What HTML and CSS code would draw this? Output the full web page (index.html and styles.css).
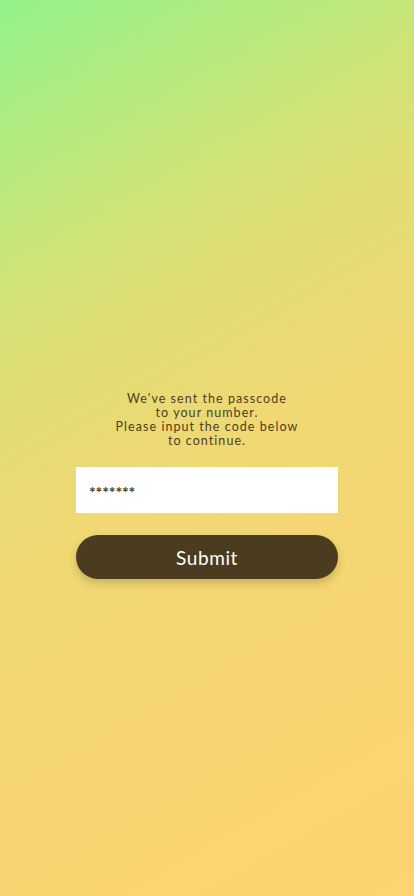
FILE: index.html
```html
<!DOCTYPE html>
<html>
<head>
<meta charset="utf-8">
<link rel="stylesheet" href="styles.css">
</head>
<body>
<main class="page">
  <p class="message">We've sent the passcode<br>to your number.<br>Please input the code below<br>to continue.</p>
  <div class="field"><span class="dots">*******</span></div>
  <button class="submit">Submit</button>
</main>
</body>
</html>
```
FILE: styles.css
```css
html, body {
  margin: 0;
  padding: 0;
  height: 100%;
}
body {
  background: linear-gradient(150deg, #93f389 0%, #d9e074 30%, #f0d873 50%, #f7d570 75%, #fdd46f 100%);
  font-family: "Lato", "Noto Sans", sans-serif;
}
.page {
  height: 896px;
  box-sizing: border-box;
  padding-top: 392px;
  display: flex;
  flex-direction: column;
  align-items: center;
}
.message {
  margin: 0;
  text-align: center;
  color: #4c3f20;
  font-size: 12.5px;
  line-height: 14px;
  letter-spacing: 1.05px;
}
.field {
  margin-top: 19px;
  width: 262px;
  height: 46px;
  background: #fff;
  box-sizing: border-box;
  padding-left: 13px;
  display: flex;
  align-items: center;
}
.dots {
  font-size: 16px;
  font-weight: 700;
  color: #4a3c1f;
  letter-spacing: -0.2px;
  padding-top: 3px;
}
.submit {
  margin-top: 22px;
  width: 262px;
  height: 44px;
  border: none;
  border-radius: 22px;
  background: #4b3c20;
  color: #fff;
  font-family: "Lato", "Noto Sans", sans-serif;
  font-size: 19px;
  letter-spacing: 0.6px;
  box-shadow: 0 4px 8px rgba(0,0,0,0.18);
}
```
